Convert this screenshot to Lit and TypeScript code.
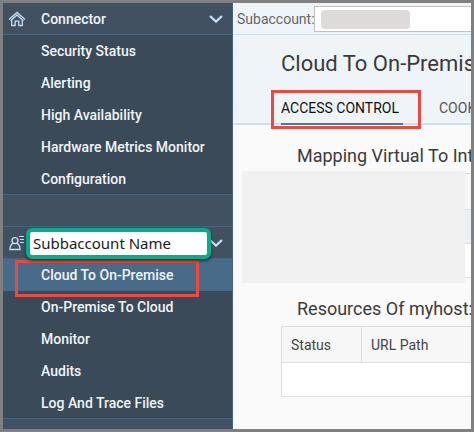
import { LitElement, html, css, nothing } from "lit";
import { customElement } from "lit/decorators.js";
import { classMap } from "lit/directives/class-map.js";

const chevron = html`<svg class="chevron" viewBox="0 0 14 8" aria-hidden="true">
  <path d="M1 1l6 5.6L13 1" fill="none" stroke="currentColor" stroke-width="2.2" />
</svg>`;

const home = html`<svg class="icon" viewBox="0 0 18 16" aria-hidden="true">
  <g fill="none" stroke="currentColor" stroke-width="1.3">
    <path d="M1 8.6L9 1.4l8 7.2" />
    <path d="M2.6 9.8L9 4l6.4 5.8" />
    <path d="M3.7 9v5.500h3.500v-4.400h3.600v4.400h3.500V9" />
  </g>
</svg>`;

const account = html`<svg class="icon" viewBox="0 0 18 16" aria-hidden="true">
  <g fill="none" stroke="currentColor" stroke-width="1.4">
    <circle cx="7" cy="5.6" r="3" />
    <path d="M5 8.2C3 9.4 2 11 2 14.5h10c0-3.5-1-5.1-3-6.3" />
    <path d="M11 1.5h5M12 4.500h4M12 7.500h4" stroke-width="1" />
  </g>
</svg>`;

@customElement("side-nav")
export class SideNav extends LitElement {
  static styles = css`
    :host {
      display: block;
      box-sizing: border-box;
      background: #3a4a59;
      border-right: 1px solid #44627d;
    }
    .group,
    .item {
      display: flex;
      align-items: center;
      box-sizing: border-box;
      width: 100%;
      height: 32px;
      margin: 0;
      border: 0;
      color: #f2f5f7;
      font: 500 14px/20px Roboto, "Liberation Sans", sans-serif;
      text-align: left;
      white-space: nowrap;
    }
    .group {
      padding: 0 9px 0 5px;
      background: #415161;
      border-bottom: 1px solid #47637d;
    }
    .icon {
      width: 18px;
      height: 16px;
      flex: none;
      margin-right: 15px;
      color: #bfddf7;
    }
    .chevron {
      width: 14px;
      height: 8px;
      margin-left: auto;
      color: #c4e2fb;
    }
    .list {
      list-style: none;
      margin: 0;
      padding: 0;
      border-bottom: 1px solid #47637d;
    }
    .list li:last-child .item {
      height: 31px;
    }
    .item {
      padding: 0 0 0 38px;
      text-decoration: none;
    }
    .selected {
      background: #486b89;
    }
    .spacer,
    .rest {
      box-sizing: border-box;
      height: 32px;
      background: #415161;
      border-bottom: 1px solid #47637d;
    }
    .rest {
      height: auto;
      flex: 1;
      border: 0;
    }
    nav {
      display: flex;
      flex-direction: column;
      height: 100%;
    }
    .anchor {
      position: relative;
    }
    .callout {
      position: absolute;
      left: 23px;
      top: 1px;
      z-index: 2;
      box-sizing: border-box;
      width: 185px;
      height: 31px;
      padding: 0 3px;
      border: 4px solid #0aab8b;
      border-radius: 6px;
      background: #fff;
      color: #1b1b1f;
      font: 15px/22px "Noto Sans", sans-serif;
      white-space: nowrap;
      box-shadow: 0 2px 3px rgba(10, 30, 30, 0.7);
    }
    .mark {
      position: absolute;
      left: 12px;
      top: 1px;
      z-index: 1;
      box-sizing: border-box;
      width: 184px;
      height: 37px;
      border: 3px solid #e94b40;
      pointer-events: none;
    }
  `;

  private items(labels: string[], selected = "") {
    return html`<ul class="list">
      ${labels.map(
        (label) => html`<li class="anchor">
          <a class=${classMap({ item: true, selected: label === selected })} href="#">${label}</a>
          ${label === selected ? html`<span class="mark"></span>` : nothing}
        </li>`
      )}
    </ul>`;
  }

  render() {
    return html`<nav>
      <button class="group">${home}Connector${chevron}</button>
      ${this.items([
        "Security Status",
        "Alerting",
        "High Availability",
        "Hardware Metrics Monitor",
        "Configuration",
      ])}
      <div class="spacer"></div>
      <div class="anchor">
        <button class="group" aria-labelledby="account-name">${account}${chevron}</button>
        <span class="callout" id="account-name">Subbaccount Name</span>
      </div>
      ${this.items(
        ["Cloud To On-Premise", "On-Premise To Cloud", "Monitor", "Audits", "Log And Trace Files"],
        "Cloud To On-Premise"
      )}
      <div class="rest"></div>
    </nav>`;
  }
}

@customElement("app-root")
export class AppRoot extends LitElement {
  static styles = css`
    :host {
      display: grid;
      grid-template-columns: 230px minmax(0, 1fr);
      box-sizing: border-box;
      min-height: 100vh;
      border: 3px solid #808080;
      font: 14px/20px Roboto, "Liberation Sans", sans-serif;
      color: #3a3a3a;
      white-space: nowrap;
    }
    main {
      overflow: hidden;
      background: #fafafa;
    }
    .bar {
      display: flex;
      align-items: center;
      box-sizing: border-box;
      height: 32px;
      padding-left: 4px;
      background: #eff4f9;
      border-bottom: 1px solid #d1e0ee;
      color: #666;
    }
    .bar label {
      width: 77px;
      flex: none;
    }
    .field {
      position: relative;
      flex: 1;
      display: flex;
    }
    .field input {
      box-sizing: border-box;
      width: 100%;
      height: 26px;
      border: 1px solid #bfbfbf;
      border-right: 0;
      background: #fff;
      font: inherit;
    }
    .redacted {
      position: absolute;
      left: 7px;
      top: 4px;
      width: 89px;
      height: 19px;
      border-radius: 4px;
      background: #dfdada;
    }
    header {
      padding: 14px 0 0 48px;
      background: #eff4f9;
      border-bottom: 2px solid #d1e0ee;
    }
    h1 {
      margin: 0;
      font-size: 22px;
      line-height: 30px;
      font-weight: 400;
    }
    .tabs {
      display: flex;
      gap: 36px;
      margin-top: 19px;
    }
    .tab {
      position: relative;
      box-sizing: border-box;
      height: 27px;
      padding: 0;
      margin: 0 0 -2px;
      border: 0;
      border-bottom: 2px solid transparent;
      background: none;
      color: #555;
      font: inherit;
      white-space: nowrap;
      display: flex;
      align-items: flex-start;
    }
    .active {
      min-width: 122px;
      color: #111;
      border-bottom-color: #427cac;
    }
    .tab-mark {
      position: absolute;
      inset: -8px -18px -6px -10px;
      border: 3px solid #e94b40;
      pointer-events: none;
    }
    section {
      padding: 19px 0 0 48px;
    }
    h2 {
      margin: 0 0 5px;
      padding-left: 16px;
      font-size: 18px;
      line-height: 24px;
      font-weight: 400;
    }
    .wrap {
      position: relative;
    }
    table {
      width: 100%;
      border-collapse: separate;
      border-spacing: 0;
      table-layout: fixed;
      border-top: 1px solid #dedede;
      border-left: 1px solid #dedede;
    }
    th,
    td {
      box-sizing: border-box;
      height: 34px;
      padding: 0 9px;
      border-bottom: 1px solid #dedede;
      background: #fff;
      text-align: left;
      font-weight: 400;
    }
    th {
      height: 36px;
      background: #f7f7f7;
      color: #444;
    }
    .status {
      width: 80px;
      border-right: 1px solid #dedede;
    }
    .highlight td {
      background: #e8eff7;
    }
    .cover {
      position: absolute;
      left: -39px;
      right: 6px;
      top: -2px;
      bottom: -5px;
      background: #f1f1f1;
    }
  `;

  render() {
    return html`
      <side-nav></side-nav>
      <main>
        <div class="bar">
          <label for="subaccount">Subaccount:</label>
          <div class="field">
            <input id="subaccount" type="text" />
            <span class="redacted"></span>
          </div>
        </div>
        <header>
          <h1>Cloud To On-Premise</h1>
          <div class="tabs">
            <button class="tab active">ACCESS CONTROL<span class="tab-mark"></span></button>
            <button class="tab">COOKIE DOMAINS</button>
          </div>
        </header>
        <section>
          <h2>Mapping Virtual To Internal System</h2>
          <div class="wrap">
            <table aria-label="Mapping">
              <tbody>
                <tr><th></th></tr>
                <tr class="highlight"><td></td></tr>
                <tr><td></td></tr>
              </tbody>
            </table>
            <div class="cover"></div>
          </div>
        </section>
        <section>
          <h2>Resources Of myhost:</h2>
          <table>
            <thead>
              <tr><th class="status">Status</th><th>URL Path</th></tr>
            </thead>
            <tbody>
              <tr><td colspan="2"></td></tr>
            </tbody>
          </table>
        </section>
      </main>
    `;
  }
}
